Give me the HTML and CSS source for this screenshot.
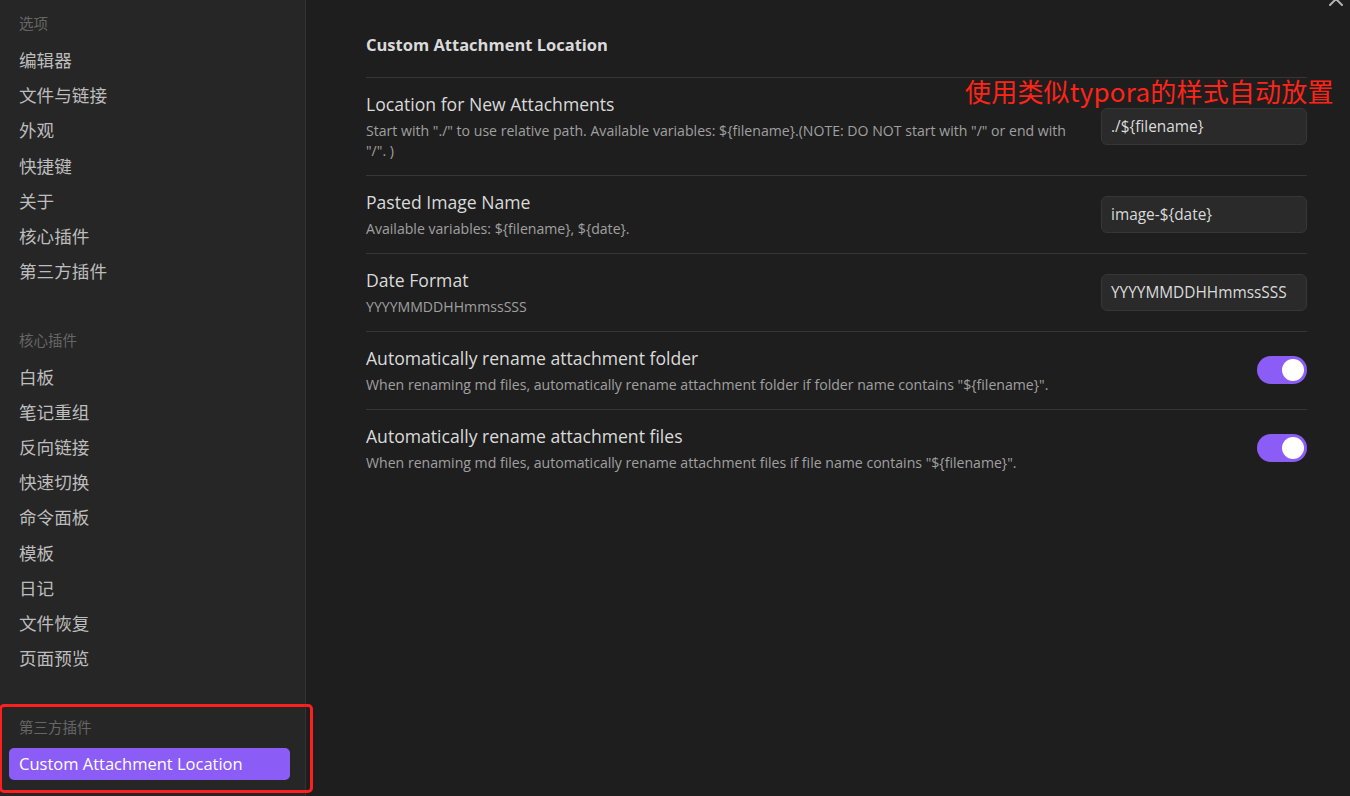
FILE: index.html
```html
<!DOCTYPE html>
<html lang="zh-CN">
<head>
<meta charset="utf-8">
<title>Custom Attachment Location</title>
<link rel="stylesheet" href="styles.css">
</head>
<body>
<div class="app">
  <nav class="sidebar">
    <div class="group">
      <div class="group-title">选项</div>
      <div class="nav-item">编辑器</div>
      <div class="nav-item">文件与链接</div>
      <div class="nav-item">外观</div>
      <div class="nav-item">快捷键</div>
      <div class="nav-item">关于</div>
      <div class="nav-item">核心插件</div>
      <div class="nav-item">第三方插件</div>
    </div>
    <div class="group">
      <div class="group-title">核心插件</div>
      <div class="nav-item">白板</div>
      <div class="nav-item">笔记重组</div>
      <div class="nav-item">反向链接</div>
      <div class="nav-item">快速切换</div>
      <div class="nav-item">命令面板</div>
      <div class="nav-item">模板</div>
      <div class="nav-item">日记</div>
      <div class="nav-item">文件恢复</div>
      <div class="nav-item">页面预览</div>
    </div>
    <div class="group">
      <div class="group-title">第三方插件</div>
      <div class="nav-item active">Custom Attachment Location</div>
    </div>
  </nav>
  <main class="content">
    <h2 class="title">Custom Attachment Location</h2>
    <div class="setting">
      <div class="info">
        <div class="name">Location for New Attachments</div>
        <div class="desc">Start with "./" to use relative path. Available variables: ${filename}.(NOTE: DO NOT start with "/" or end with "/". )</div>
      </div>
      <div class="control"><div class="input">./${filename}</div></div>
    </div>
    <div class="setting">
      <div class="info">
        <div class="name">Pasted Image Name</div>
        <div class="desc">Available variables: ${filename}, ${date}.</div>
      </div>
      <div class="control"><div class="input">image-${date}</div></div>
    </div>
    <div class="setting">
      <div class="info">
        <div class="name">Date Format</div>
        <div class="desc">YYYYMMDDHHmmssSSS</div>
      </div>
      <div class="control"><div class="input">YYYYMMDDHHmmssSSS</div></div>
    </div>
    <div class="setting">
      <div class="info">
        <div class="name">Automatically rename attachment folder</div>
        <div class="desc">When renaming md files, automatically rename attachment folder if folder name contains "${filename}".</div>
      </div>
      <div class="control"><div class="toggle"><span class="knob"></span></div></div>
    </div>
    <div class="setting">
      <div class="info">
        <div class="name">Automatically rename attachment files</div>
        <div class="desc">When renaming md files, automatically rename attachment files if file name contains "${filename}".</div>
      </div>
      <div class="control"><div class="toggle"><span class="knob"></span></div></div>
    </div>
    <svg class="close" width="16" height="16" viewBox="0 0 16 16"><path d="M2 2 L14 14 M14 2 L2 14" stroke="#b3b3b3" stroke-width="2" stroke-linecap="round" fill="none"/></svg>
  </main>
  <div class="note">使用类似typora的样式自动放置</div>
  <div class="highlight-box"></div>
</div>
</body>
</html>
```

FILE: styles.css
```css
* { box-sizing: border-box; }
html, body { margin: 0; padding: 0; }
body {
  width: 1350px;
  height: 796px;
  overflow: hidden;
  background: #1e1e1e;
  font-family: "Open Sans", "Noto Sans CJK SC", sans-serif;
  color: #dadada;
}
.app {
  position: relative;
  display: flex;
  height: 796px;
}
.sidebar {
  width: 306px;
  flex: none;
  background: #262626;
  border-right: 1px solid #333;
  padding: 0 15px 0 9px;
}
.group { padding-top: 13px; }
.group + .group { margin-top: 29.5px; }
.group-title {
  font-family: "Noto Sans CJK SC", sans-serif;
  font-size: 14.5px;
  line-height: 20px;
  height: 20px;
  color: #666;
  padding-left: 10px;
  margin-bottom: 11px;
}
.nav-item {
  font-family: "Noto Sans CJK SC", sans-serif;
  font-size: 17.6px;
  line-height: 32px;
  height: 32px;
  margin-bottom: 3.2px;
  padding-left: 10px;
  color: #bdbdbd;
  border-radius: 5px;
  white-space: nowrap;
}
.nav-item.active {
  font-family: "Open Sans", sans-serif;
  font-size: 16.5px;
  background: #8b5cf6;
  color: #fff;
}
.content {
  position: relative;
  flex: 1;
  padding: 28px 43px 0 60px;
}
.title {
  margin: 0;
  font-size: 16.5px;
  font-weight: 700;
  line-height: 34px;
  color: #dadada;
  padding-bottom: 15px;
  border-bottom: 1px solid #363636;
}
.setting {
  display: flex;
  align-items: center;
  padding: 14.25px 0;
  border-bottom: 1px solid #363636;
}
.setting:last-of-type { border-bottom: none; }
.info { flex: 1; margin-right: 20px; }
.name {
  font-size: 17.6px;
  line-height: 24px;
  color: #dadada;
}
.desc {
  font-size: 14.1px;
  line-height: 19.5px;
  margin-top: 5px;
  color: #a0a0a0;
}
.control { flex: none; display: flex; justify-content: flex-end; }
.input {
  width: 206px;
  height: 37px;
  background: #2a2a2a;
  border: 1px solid #363636;
  border-radius: 6px;
  padding: 0 9px;
  font-size: 15.4px;
  line-height: 35px;
  color: #dadada;
  white-space: nowrap;
}
.toggle {
  width: 50px;
  height: 28px;
  border-radius: 14px;
  background: #8b5cf6;
  display: flex;
  align-items: center;
  justify-content: flex-end;
  padding-right: 3px;
}
.knob {
  width: 22px;
  height: 22px;
  border-radius: 50%;
  background: #fff;
}
.close {
  position: absolute;
  top: -9px;
  right: 6px;
}
.note {
  position: absolute;
  left: 965px;
  top: 74px;
  font-family: "Noto Sans CJK SC", sans-serif;
  font-size: 26px;
  line-height: 34px;
  letter-spacing: 0.2px;
  color: #ff2418;
  white-space: nowrap;
}
.highlight-box {
  position: absolute;
  left: -1px;
  top: 704px;
  width: 314px;
  height: 89px;
  border: 3.5px solid #ff1f1f;
  border-radius: 5px;
}
```
